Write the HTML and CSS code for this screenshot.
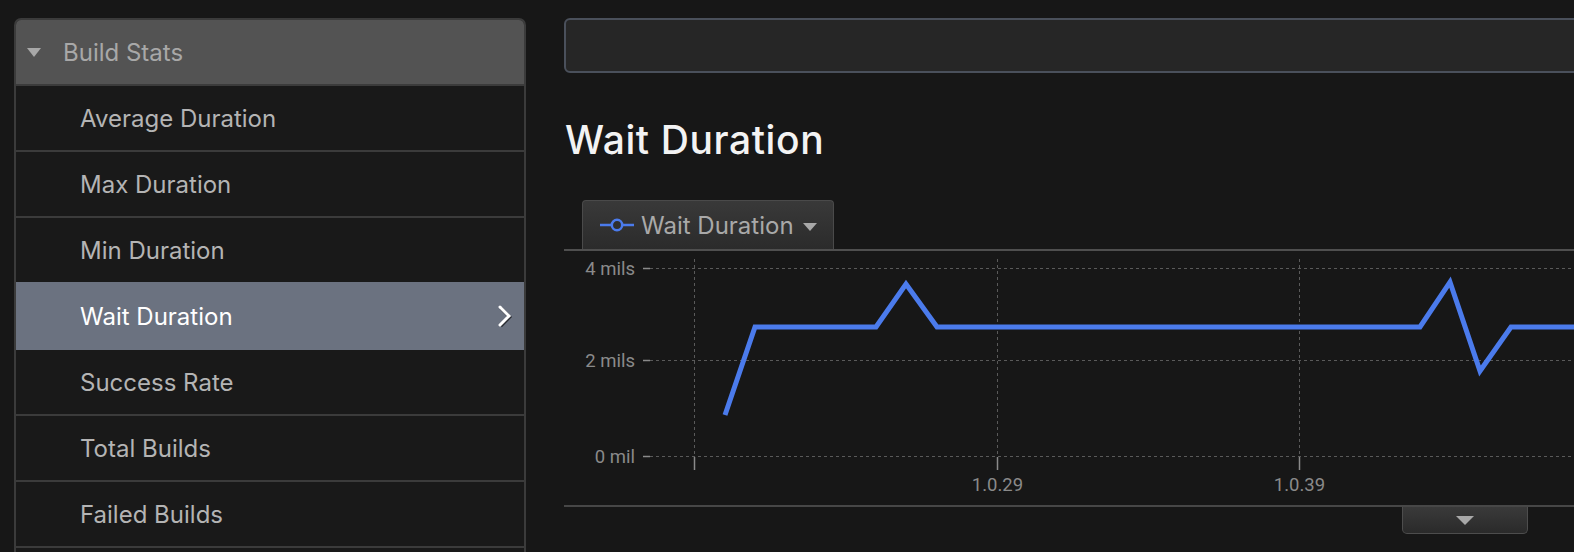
FILE: index.html
```html
<!DOCTYPE html>
<html lang="en">
<head>
  <meta charset="UTF-8" />
  <meta name="viewport" content="width=device-width, initial-scale=1.0"/>
  <title>Build Stats</title>
  <link rel="stylesheet" href="styles.css">
</head>
<body>

  <!-- side menu -->
  <div class="side">
    <div class="side-head">
      <span class="caret"></span>
      <span>Build Stats</span>
    </div>
    <div class="side-item">Average Duration</div>
    <div class="side-item">Max Duration</div>
    <div class="side-item">Min Duration</div>
    <div class="side-item active">
      <span>Wait Duration</span>
      <svg class="chev" width="16" height="24" viewBox="0 0 16 24">
        <polyline points="4,3 13,12 4,21" fill="none" stroke="#000" stroke-opacity="0.6" stroke-width="3.2" transform="translate(0.8,1)"/>
        <polyline points="4,3 13,12 4,21" fill="none" stroke="#fff" stroke-width="3" stroke-linecap="round"/>
      </svg>
    </div>
    <div class="side-item">Success Rate</div>
    <div class="side-item">Total Builds</div>
    <div class="side-item">Failed Builds</div>
    <div class="side-item"></div>
  </div>

  <!-- main area -->
  <div class="main">
    <div class="search"></div>

    <h1>Wait Duration</h1>

    <div class="legend-row">
      <div class="legend">
        <svg width="34" height="14" viewBox="0 0 34 14">
          <line x1="0" y1="7" x2="34" y2="7" stroke="#4b7bec" stroke-width="2.5"/>
          <circle cx="17" cy="7" r="5.2" fill="#2f2f2f" stroke="#4b7bec" stroke-width="2.5"/>
        </svg>
        <span>Wait Duration</span>
        <span class="caret small"></span>
      </div>
    </div>

    <div class="plot">
      <svg width="1200" height="254" viewBox="0 0 1200 254">
        <g stroke="#5a5a5a" stroke-width="1" stroke-dasharray="3 3">
          <line x1="86" y1="17.5" x2="1200" y2="17.5"/>
          <line x1="86" y1="109.5" x2="1200" y2="109.5"/>
          <line x1="86" y1="205.5" x2="1200" y2="205.5"/>
          <line x1="130.5" y1="8" x2="130.5" y2="206"/>
          <line x1="433.5" y1="8" x2="433.5" y2="206"/>
          <line x1="735.5" y1="8" x2="735.5" y2="206"/>
        </g>
        <g stroke="#8a8a8a" stroke-width="1.5">
          <line x1="79" y1="17.5" x2="86" y2="17.5"/>
          <line x1="79" y1="109.5" x2="86" y2="109.5"/>
          <line x1="79" y1="205.5" x2="86" y2="205.5"/>
          <line x1="130.5" y1="206" x2="130.5" y2="219"/>
          <line x1="433.5" y1="206" x2="433.5" y2="219"/>
          <line x1="735.5" y1="206" x2="735.5" y2="219"/>
        </g>
        <g class="axis" text-anchor="end">
          <text x="71" y="24">4 mils</text>
          <text x="71" y="116">2 mils</text>
          <text x="71" y="212">0 mil</text>
        </g>
        <g class="axis" text-anchor="middle">
          <text x="433.5" y="240">1.0.29</text>
          <text x="735.5" y="240">1.0.39</text>
        </g>
        <polyline fill="none" stroke="#4b7bec" stroke-width="5" stroke-linejoin="miter"
          points="161,164 191,76 312,76 342,33 373,76 856,76 886,31 916,120 947,76 1200,76"/>
      </svg>
    </div>

    <div class="expand">
      <span class="caret"></span>
    </div>
  </div>

</body>
</html>
```

FILE: styles.css
```css
html, body {
  height: 100%;
}
body {
  margin: 0;
  padding: 18px 0 0 14px;
  box-sizing: border-box;
  background-color: #171717;
  font-family: 'Inter', 'Noto Sans', sans-serif;
  display: flex;
  align-items: flex-start;
  gap: 38px;
  overflow: hidden;
}

/* side menu */
.side {
  width: 512px;
  flex-shrink: 0;
  border: 2px solid #3b3b3b;
  border-bottom: none;
  border-radius: 7px 7px 0 0;
  background-color: #191919;
  box-sizing: border-box;
}
.side-head {
  height: 64px;
  display: flex;
  align-items: center;
  gap: 22px;
  padding-left: 11px;
  background-color: #535353;
  color: #a8a8a8;
  font-size: 24px;
  border-bottom: 2px solid #3b3b3b;
  border-radius: 5px 5px 0 0;
}
.caret {
  width: 0;
  height: 0;
  border-left: 7.5px solid transparent;
  border-right: 7.5px solid transparent;
  border-top: 9px solid #a8a8a8;
  display: inline-block;
}
.side-item {
  height: 64px;
  display: flex;
  align-items: center;
  justify-content: space-between;
  padding: 0 12px 0 64px;
  color: #b4b4b4;
  font-size: 24px;
  border-bottom: 2px solid #3b3b3b;
}
.side-item.active {
  background-color: #6b7280;
  color: #fff;
  border-bottom-color: #6b7280;
  box-shadow: 0 -2px 0 #6b7280;
}
.chev { display: block; }

/* main area */
.main {
  width: 1200px;
  flex-shrink: 0;
}
.search {
  height: 51px;
  border: 2px solid #4a505b;
  border-radius: 6px;
  background-color: #262626;
}
h1 {
  margin: 45px 0 0 1px;
  font-size: 39px;
  line-height: 44px;
  font-weight: 500;
  letter-spacing: 0.6px;
  color: #f3f3f3;
}
.legend-row {
  margin-top: 38px;
  padding-left: 18px;
  display: flex;
}
.legend {
  height: 49px;
  width: 252px;
  box-sizing: border-box;
  display: flex;
  align-items: center;
  padding-left: 17px;
  border: 1px solid #4a4a4a;
  border-bottom: none;
  border-radius: 4px 4px 0 0;
  background: linear-gradient(#393939, #2b2b2b);
  color: #a9a9a9;
  font-size: 24px;
}
.legend svg { margin-right: 7px; }
.legend .small {
  margin-left: 9px;
  border-left-width: 7.5px;
  border-right-width: 7.5px;
  border-top-width: 8px;
  margin-top: 3px;
}
.plot {
  border-top: 2px solid #4f4f4f;
  border-bottom: 2px solid #474747;
  height: 254px;
}
.plot svg { display: block; }
.axis {
  font-family: 'Roboto', sans-serif;
  font-size: 18.5px;
  fill: #8a8a8a;
}
.expand {
  margin-left: 838px;
  width: 126px;
  height: 27px;
  box-sizing: border-box;
  border: 1px solid #4d4d4d;
  border-top: none;
  border-radius: 0 0 5px 5px;
  background: linear-gradient(#3a3a3a, #2a2a2a);
  display: flex;
  align-items: center;
  justify-content: center;
}
.expand .caret {
  border-left-width: 9px;
  border-right-width: 9px;
  border-top-width: 9px;
}
```
